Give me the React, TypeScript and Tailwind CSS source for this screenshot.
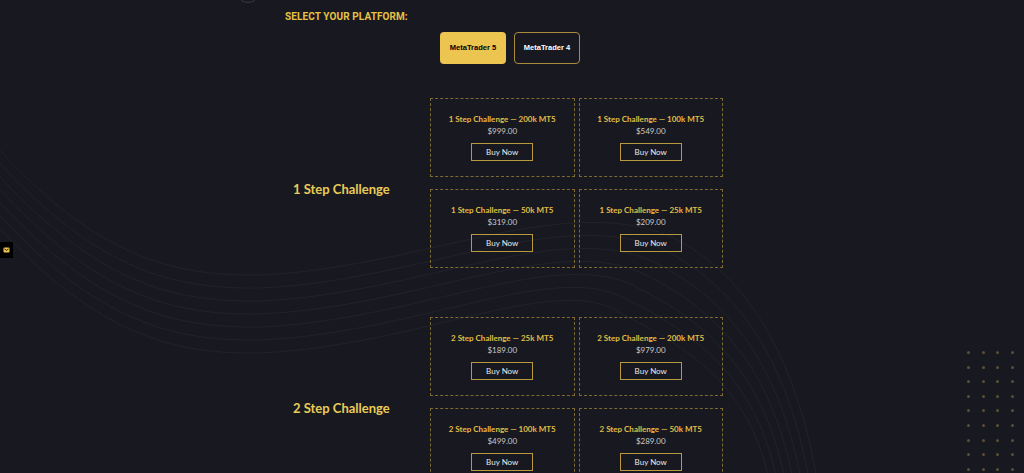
import React from "react";

type Plan = { title: string; price: string };

const oneStep: Plan[] = [
  { title: "1 Step Challenge — 200k MT5", price: "$999.00" },
  { title: "1 Step Challenge — 100k MT5", price: "$549.00" },
  { title: "1 Step Challenge — 50k MT5", price: "$319.00" },
  { title: "1 Step Challenge — 25k MT5", price: "$209.00" },
];

const twoStep: Plan[] = [
  { title: "2 Step Challenge — 25k MT5", price: "$189.00" },
  { title: "2 Step Challenge — 200k MT5", price: "$979.00" },
  { title: "2 Step Challenge — 100k MT5", price: "$499.00" },
  { title: "2 Step Challenge — 50k MT5", price: "$289.00" },
];

const Waves = () => (
  <svg className="absolute inset-0 pointer-events-none" width="1024" height="473" fill="none">
    {[0, 1, 2, 3, 4, 5, 6].map((i) => {
      const d = i * 13;
      const r = i * 8;
      return (
        <path
          key={i}
          d={`M -5 ${145 + d} C 100 ${262 + d}, 180 ${276 + d}, 260 ${275 + d} C 420 ${268 + d}, 560 ${192 + d}, ${670 - r} ${236 + d} C ${760 - r} ${280 + d}, ${800 - r} ${380 + d * 0.3}, ${817 - r} 480`}
          stroke="#22232a"
          strokeWidth="1"
        />
      );
    })}
  </svg>
);

const Dots = () => (
  <div className="absolute left-[967px] top-[351px] grid grid-cols-4 gap-x-[11.7px] gap-y-[11.6px]">
    {Array.from({ length: 36 }).map((_, i) => (
      <span key={i} className="block w-[3px] h-[3px] rounded-full bg-[#5a5033]" />
    ))}
  </div>
);

const PlanCard = ({ plan }: { plan: Plan }) => (
  <div className="h-[79px] border border-dashed border-[#7d6a33] flex flex-col items-center pt-[15px]">
    <p className="text-[8px] leading-[10px] font-bold text-[#e2bd47]">{plan.title}</p>
    <p className="mt-[2px] text-[8px] leading-[10px] text-[#c9c9cc]">{plan.price}</p>
    <button className="mt-[7px] w-[62px] h-[18px] border-[1.5px] border-[#b8993e] text-[8px] text-[#e8e8ea]">
      Buy Now
    </button>
  </div>
);

const Section = ({ label, plans }: { label: string; plans: Plan[] }) => (
  <div className="flex">
    <div className="w-[145px] pl-2 pt-[14px] flex items-center">
      <h2 className="text-[13px] font-bold text-[#eacb58]">{label}</h2>
    </div>
    <div className="w-[293px] grid grid-cols-2 gap-x-[4px] gap-y-[12px]">
      {plans.map((p) => (
        <PlanCard key={p.title} plan={p} />
      ))}
    </div>
  </div>
);

export default function App() {
  return (
    <div className="relative w-full h-[473px] overflow-hidden bg-[#181920] font-['Lato',sans-serif]">
      <Waves />
      <Dots />

      {/* partial circle at the top edge */}
      <div className="absolute left-[236px] top-[-21px] w-[24px] h-[24px] rounded-full border border-[#3a3b42]" />

      {/* side tab */}
      <div className="absolute left-0 top-[242px] w-[13px] h-[16px] bg-black flex items-center justify-center">
        <svg width="7" height="6" viewBox="0 0 7 6">
          <rect x="0.5" y="0.5" width="6" height="5" rx="1" fill="#e9c44f" />
          <path d="M1.5 2 L3.5 3.3 L5.5 2" stroke="#000" strokeWidth="0.8" fill="none" />
        </svg>
      </div>

      <div className="relative mx-auto w-[454px] pt-[11px]">
        <p className="text-[10px] leading-[12px] font-bold tracking-[0.1px] text-[#e6c244] font-['Roboto',sans-serif]">
          SELECT YOUR PLATFORM:
        </p>

        <div className="mt-[9px] flex justify-center gap-2 pr-[4px] font-['Liberation_Sans',sans-serif]">
          <button className="w-[66px] h-[32px] rounded-[4px] bg-[#ebc54f] text-[7.5px] font-bold text-black">
            MetaTrader 5
          </button>
          <button className="w-[66px] h-[32px] rounded-[4px] border border-[#a98b3b] text-[7.5px] font-bold text-white">
            MetaTrader 4
          </button>
        </div>

        <div className="mt-[34px] flex flex-col gap-[49px]">
          <Section label="1 Step Challenge" plans={oneStep} />
          <Section label="2 Step Challenge" plans={twoStep} />
        </div>
      </div>
    </div>
  );
}
